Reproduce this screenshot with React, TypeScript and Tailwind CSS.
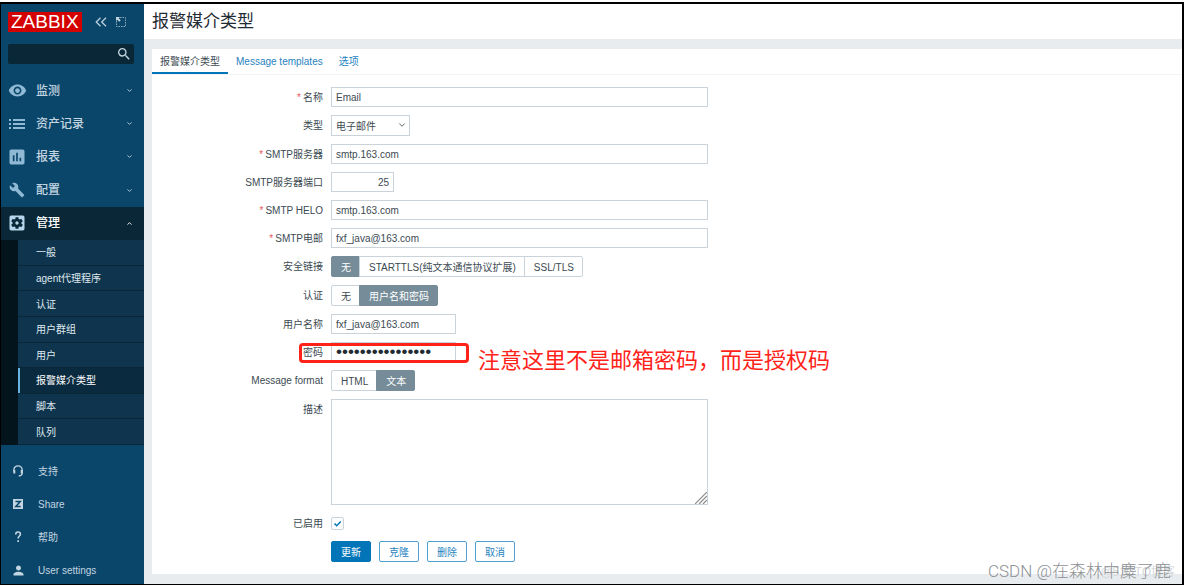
import React from 'react';
import type { IconType } from 'react-icons';
import { MdVisibility, MdAssessment, MdBuild, MdSettingsApplications, MdSearch, MdPerson } from 'react-icons/md';
import { ChevronDown, ChevronUp } from 'lucide-react';

const ListIcon: React.FC<{ className?: string }> = ({ className }) => (
  <svg viewBox="0 0 20 20" fill="currentColor" className={className} aria-hidden="true">
    <path d="M2 5h2v2H2zM6 5h12v2H6zM2 9h2v2H2zM6 9h12v2H6zM2 13h2v2H2zM6 13h12v2H6z" />
  </svg>
);

const SupportIcon: React.FC = () => (
  <svg viewBox="0 0 12 12" fill="none" stroke="currentColor" className="size-3" aria-hidden="true">
    <path d="M1.8 6.5V5a4.2 4.2 0 0 1 8.4 0v3c0 1.8-1 2.8-3.4 3" strokeWidth="1.3" />
    <path d="M2.3 5v3.6M9.7 5v3.6" strokeWidth="2" />
  </svg>
);

const ShareIcon: React.FC = () => (
  <svg viewBox="0 0 12 12" className="size-3" aria-hidden="true">
    <path d="M1 1h10v10H1z" fill="currentColor" />
    <path d="M3.5 3.5h4.8L3.8 8.5h4.8" fill="none" stroke="#0a466a" strokeWidth="1.5" />
  </svg>
);

const HelpIcon: React.FC = () => (
  <svg viewBox="0 0 12 12" fill="none" stroke="currentColor" className="size-3" aria-hidden="true">
    <path d="M3.7 3.6C3.7 1.8 4.7 1 6 1s2.4.8 2.4 2.2c0 1.8-2.3 2-2.3 4.4" strokeWidth="1.6" />
    <path d="M5.3 9.2h1.7v1.7H5.3z" fill="currentColor" stroke="none" />
  </svg>
);

const menu: { label: string; icon: IconType | typeof ListIcon; size: string; open?: boolean }[] = [
  { label: '监测', icon: MdVisibility, size: 'size-[19px]' },
  { label: '资产记录', icon: ListIcon, size: 'size-5' },
  { label: '报表', icon: MdAssessment, size: 'size-5' },
  { label: '配置', icon: MdBuild, size: 'size-4' },
  { label: '管理', icon: MdSettingsApplications, size: 'size-5', open: true },
];

const submenu = ['一般', 'agent代理程序', '认证', '用户群组', '用户', '报警媒介类型', '脚本', '队列'];

const footerLinks = [
  { label: '支持', icon: <SupportIcon /> },
  { label: 'Share', icon: <ShareIcon /> },
  { label: '帮助', icon: <HelpIcon /> },
  { label: 'User settings', icon: <MdPerson className="size-[15px]" /> },
];

const Sidebar: React.FC = () => (
  <aside className="flex w-[143px] shrink-0 flex-col bg-[#0a466a] text-[#c3d5e0]">
    <div className="flex h-9 items-center pl-[7px]">
      <a href="#" className="bg-[#d40000] px-[3px] text-[19px] leading-5 text-white">ZABBIX</a>
      <button type="button" aria-label="Collapse sidebar" className="ml-[13px]">
        <svg viewBox="0 0 12 10" fill="none" stroke="currentColor" className="h-[10px] w-3">
          <path d="M5.5.8 1.2 5l4.3 4.2M11 .8 6.7 5 11 9.2" strokeWidth="1.2" />
        </svg>
      </button>
      <button type="button" aria-label="Hide sidebar" className="ml-2">
        <svg viewBox="0 0 12 12" fill="none" stroke="currentColor" className="size-3">
          <path d="M5 1.5h5.5v9h-9V5" strokeDasharray="1.5 1" strokeOpacity="0.7" />
          <path d="M1 1h4L3.7 2.3l2 2-1.4 1.4-2-2L1 5z" fill="currentColor" stroke="none" />
        </svg>
      </button>
    </div>
    <form className="mt-1 mr-[10px] ml-[7px] flex h-5 items-center rounded-xs bg-[#0a2737] pr-[2px]">
      <input type="search" aria-label="Search" className="h-full w-full min-w-0 pl-1 text-[10px] outline-none" />
      <button type="button" aria-label="Search"><MdSearch className="size-4" /></button>
    </form>
    <nav className="mt-[10px]">
      <ul className="grid h-[166px] grid-rows-5 text-xs font-medium">
        {menu.map(({ label, icon: Icon, size, open }) => (
          <li key={label} className={open ? 'bg-[#0a2737] text-white' : ''}>
            <a href="#" className="flex h-full items-center pr-[11px] pl-[6px]">
              <span className={`flex w-5 justify-center ${open ? 'text-[#b5d6ea]' : 'text-[#8fb9d4]'}`}>
                <Icon className={size} />
              </span>
              <span className="ml-[9px] flex-1">{label}</span>
              {open ? <ChevronUp className="size-[7px]" strokeWidth={3} /> : <ChevronDown className="size-[7px]" strokeWidth={3} />}
            </a>
          </li>
        ))}
      </ul>
      <ul className="grid h-[205px] grid-rows-8 bg-[#04141d] pl-[17px] text-[10px] text-[#dfe9ef]">
        {submenu.map((item) => (
          <li key={item} className="border-b border-[#0a2737] bg-[#0f344d]">
            <a
              href="#"
              className={
                item === '报警媒介类型'
                  ? 'flex h-full items-center border-l-2 border-[#69b3e0] bg-[#0a2b3f] pt-px pl-4 text-white'
                  : 'flex h-full items-center pt-px pl-[18px]'
              }
            >
              {item}
            </a>
          </li>
        ))}
      </ul>
    </nav>
    <ul className="mt-4 flex flex-col gap-[13px] pb-1 text-[10px]">
      {footerLinks.map(({ label, icon }) => (
        <li key={label}>
          <a href="#" className="flex h-5 items-center pl-[9px]">
            <span className="flex w-4 justify-center">{icon}</span>
            <span className="ml-3">{label}</span>
          </a>
        </li>
      ))}
    </ul>
  </aside>
);

const fieldClass = 'h-5 border border-[#c9d3d9] bg-white px-1 text-[10px] outline-none';

const Row: React.FC<{ label: string; htmlFor?: string; required?: boolean; children: React.ReactNode }> = ({
  label,
  htmlFor,
  required,
  children,
}) => (
  <div className="flex gap-2">
    <label htmlFor={htmlFor} className="h-5 w-[171px] shrink-0 text-right leading-[22px]">
      {required && <span className="mr-[2px] text-[#e45959]">*</span>}
      {label}
    </label>
    <div className="flex min-w-0 flex-1">{children}</div>
  </div>
);

const TextRow: React.FC<{ id: string; label: string; value: string; required?: boolean }> = ({ id, label, value, required }) => (
  <Row label={label} htmlFor={id} required={required}>
    <input id={id} type="text" defaultValue={value} className={`${fieldClass} w-full max-w-[377px]`} />
  </Row>
);

const Segmented: React.FC<{ name: string; options: string[]; selected: string }> = ({ name, options, selected }) => (
  <div role="radiogroup" aria-label={name} className="flex h-[21px]">
    {options.map((option) => (
      <label
        key={option}
        className="relative -mr-px flex items-center border border-[#c9d3d9] pt-px pr-2 pl-[9px] first:rounded-l-xs last:rounded-r-xs has-checked:border-[#768d99] has-checked:bg-[#768d99] has-checked:text-white"
      >
        <input type="radio" name={name} defaultChecked={option === selected} className="sr-only" />
        {option}
      </label>
    ))}
  </div>
);

const MediaTypeForm: React.FC = () => (
  <form className="flex flex-col gap-2 pt-3 pb-3">
    <TextRow id="name" label="名称" value="Email" required />
    <Row label="类型" htmlFor="type">
      <div className="relative h-[21px]">
        <select id="type" className="h-[21px] w-[79px] appearance-none border border-[#c9d3d9] bg-white pt-px pl-1 text-[10px] outline-none">
          <option>电子邮件</option>
        </select>
        <ChevronDown className="pointer-events-none absolute top-[5px] right-[3px] size-[10px]" />
      </div>
    </Row>
    <TextRow id="smtp-server" label="SMTP服务器" value="smtp.163.com" required />
    <Row label="SMTP服务器端口" htmlFor="smtp-port">
      <input id="smtp-port" type="text" defaultValue="25" className={`${fieldClass} w-[63px] text-right`} />
    </Row>
    <TextRow id="smtp-helo" label="SMTP HELO" value="smtp.163.com" required />
    <TextRow id="smtp-email" label="SMTP电邮" value="fxf_java@163.com" required />
    <Row label="安全链接">
      <Segmented name="security" options={['无', 'STARTTLS(纯文本通信协议扩展)', 'SSL/TLS']} selected="无" />
    </Row>
    <Row label="认证">
      <Segmented name="authentication" options={['无', '用户名和密码']} selected="用户名和密码" />
    </Row>
    <Row label="用户名称" htmlFor="username">
      <input id="username" type="text" defaultValue="fxf_java@163.com" className={`${fieldClass} w-[125px]`} />
    </Row>
    <Row label="密码" htmlFor="password">
      <div className="relative flex">
        <input
          id="password"
          type="password"
          defaultValue="abcdefghijklmnop"
          className="h-5 w-[125px] border border-[#c9d3d9] bg-white px-1 text-[17px] text-[#1f2c33] outline-none"
        />
        <div className="pointer-events-none absolute top-px -left-8 h-5 w-[170px] rounded-sm border-[3px] border-[#ff2218]" />
        <p className="absolute top-0 left-[147px] text-[22px] leading-[38px] whitespace-nowrap text-[#ff2218]">
          注意这里不是邮箱密码，而是授权码
        </p>
      </div>
    </Row>
    <Row label="Message format">
      <Segmented name="message-format" options={['HTML', '文本']} selected="文本" />
    </Row>
    <Row label="描述" htmlFor="description">
      <div className="relative flex w-full max-w-[377px]">
        <textarea id="description" className="h-[106px] w-full resize-none border border-[#c9d3d9] bg-white p-1 text-[10px] outline-none" />
        <svg viewBox="0 0 12 12" stroke="#8a8a8a" className="pointer-events-none absolute right-px bottom-px size-3">
          <path d="M0 12 12 0M4 12l8-8M8 12l4-4" strokeWidth="1.2" />
        </svg>
      </div>
    </Row>
    <Row label="已启用" htmlFor="enabled">
      <div className="relative flex items-center">
        <input id="enabled" type="checkbox" defaultChecked className="size-[13px] appearance-none rounded-xs border border-[#c9d3d9] bg-white" />
        <svg viewBox="0 0 13 13" fill="none" stroke="#0275b8" className="pointer-events-none absolute size-[13px]">
          <path d="M3.5 6.5 5.7 8.7 9.8 4.4" strokeWidth="1.5" />
        </svg>
      </div>
    </Row>
    <div className="flex gap-2 pl-[179px]">
      <button type="submit" className="h-[21px] w-10 rounded-xs border border-[#0275b8] bg-[#0275b8] pt-px text-white">更新</button>
      {['克隆', '删除', '取消'].map((action) => (
        <button key={action} type="button" className="h-[21px] w-10 rounded-xs border border-[#4fa0d0] pt-px text-[#1f83bf]">{action}</button>
      ))}
    </div>
  </form>
);

const App: React.FC = () => (
  <div className="relative flex min-h-screen flex-col bg-white pt-[2px] pb-[2px] font-['Liberation_Sans','Noto_Sans_CJK_SC',sans-serif] text-[10px] text-[#3c4a52]">
    <div className="flex flex-1 border-t-2 border-r-2 border-b border-l border-black">
      <Sidebar />
      <main className="flex min-w-0 flex-1 flex-col bg-[#e8ecef]">
        <header className="flex h-[35px] items-center bg-white pt-px pl-2">
          <h1 className="text-[17px] text-[#1f2c33]">报警媒介类型</h1>
        </header>
        <div className="mt-[10px] mb-[10px] ml-2 flex-1 bg-white">
          <nav className="flex h-[26px] border-b border-[#f2f4f5]">
            <a href="#" className="flex items-center border-b-2 border-[#0275b8] px-2 pt-[2px]">报警媒介类型</a>
            <a href="#" className="flex items-center px-2 text-[#1f83bf]">Message templates</a>
            <a href="#" className="flex items-center px-2 text-[#1f83bf]">选项</a>
          </nav>
          <MediaTypeForm />
        </div>
      </main>
    </div>
    <p className="absolute right-[9px] bottom-[7px] text-[12px] leading-4 text-[#d5d8da]">@51CTO博客</p>
    <p className="absolute right-[13px] bottom-1 font-['Roboto','Noto_Sans_CJK_SC',sans-serif] text-[17px] leading-6 font-light text-[#8d9195]">
      CSDN @在森林中麋了鹿
    </p>
  </div>
);

export default App;
